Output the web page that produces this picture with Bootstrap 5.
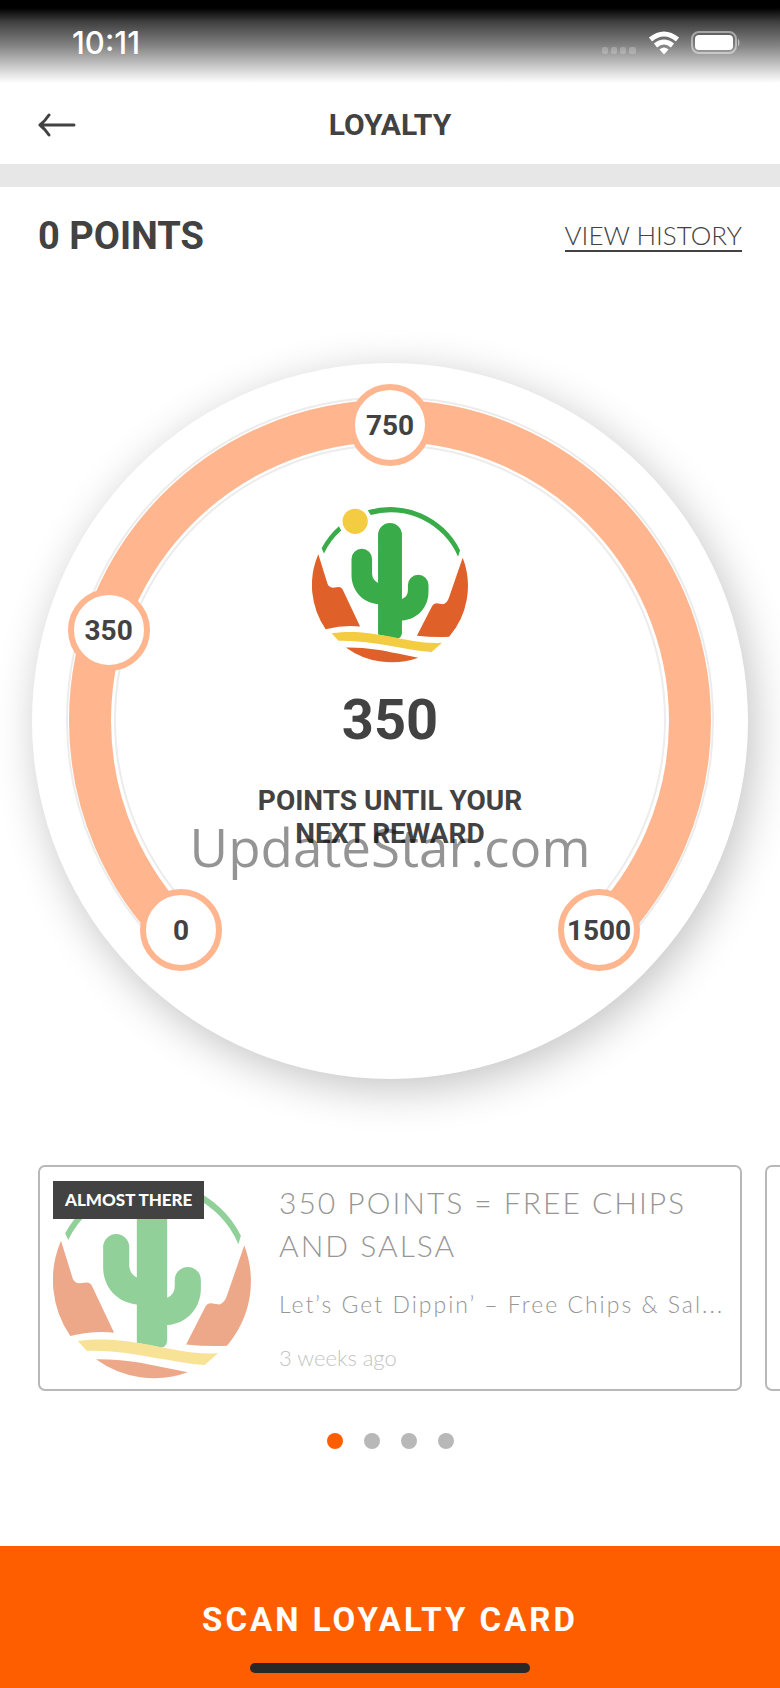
<!DOCTYPE html>
<html lang="en">
<head>
<meta charset="utf-8">
<meta name="viewport" content="width=device-width, initial-scale=1">
<title>Loyalty</title>
<link href="https://cdn.jsdelivr.net/npm/bootstrap@5.3.0/dist/css/bootstrap.min.css" rel="stylesheet">
<style>
  :root { --ink: #424242; --brand: #ff5e00; --peach: #ffb58d; --line: #b8b8b8; }
  body { font-family: Roboto, "Liberation Sans", sans-serif; color: var(--ink); background: #fff; overflow-x: hidden; }
  .thin-face { font-family: Lato, "Open Sans", sans-serif; font-weight: 300; }

  .status-bar { padding: 2px 40px 0 72px; height: 83px; color: #fff; background: linear-gradient(#000 0, #000 8px, #404040 22px, #848484 46px, #dcdcdc 72px, #fff 83px); }
  .clock { font: 500 31px/32px Inter, sans-serif; }
  .app-header { height: 81px; padding: 2px 38px 0; display: grid; grid-template-columns: 1fr auto 1fr; }
  .app-header h1 { font-size: 30px; line-height: 36px; }
  .divider-band { height: 23px; background: #e7e7e7; }
  .points-row { padding: 25px 38px 0; }
  .points-row h2 { font-size: 38px; line-height: 48px; }
  .history-link { font-size: 26px; line-height: 30px; color: var(--ink); border-bottom: 2px solid var(--ink); }

  .gauge { margin: 103px 32px 0; aspect-ratio: 1; box-shadow: 6px 10px 44px rgba(0, 0, 0, .24); }
  .gauge-ring { inset: 0; }
  .node { width: 82px; height: 82px; border: 6px solid var(--peach); font-size: 28px; line-height: 32px; padding-top: 2px; }
  .gauge-body { padding-top: 144px; }
  .gauge-body .logo { width: 156px; height: 156px; }
  .gauge-count { font-size: 56px; line-height: 64px; margin-top: 25px; }
  .gauge-note { font-size: 28px; line-height: 33px; margin-top: 32px; }
  .watermark { top: 62%; font: 400 53px/80px "Open Sans", "Noto Sans", sans-serif; color: rgba(0, 0, 0, .42); }

  .rewards { padding: 86px 0 0 38px; gap: 23px; }
  .reward { flex: 0 0 calc(100% - 38px); border: 2px solid var(--line); border-radius: 7px; padding: 14px 13px 10px; gap: 28px; color: #969696; min-width: 0; }
  .reward .logo { width: 198px; height: 198px; opacity: .55; }
  .tag { padding: 0 12px; font: 900 17px/38px Lato, sans-serif; color: #fff; background: var(--ink); }
  .reward h3 { font-size: 30px; line-height: 43px; letter-spacing: 2px; font-weight: 300; }
  .reward-text { font-size: 23px; line-height: 30px; letter-spacing: 2px; margin-top: 22px; }
  .reward-time { font-size: 22px; line-height: 30px; margin-top: 24px; color: #c4c4c4; }

  .pager { padding: 42px 0 96px; gap: 21px; }
  .pager button { width: 16px; height: 16px; background: var(--line); }
  .pager button.active { background: var(--brand); }

  .scan { background: var(--brand); padding-bottom: 15px; }
  .scan button { color: #fff; font-size: 33px; line-height: 40px; font-weight: 700; letter-spacing: 3px; padding: 54px 0 23px; }
  .home-bar { width: 36%; height: 10px; background: #282826; }
</style>
</head>
<body>
<svg class="d-none" aria-hidden="true">
  <symbol id="cactus" viewBox="65 50 470 470">
    <g fill="#3aab49">
      <path d="M233 60A235 235 0 0 1 511 180L505 200A221 221 0 0 0 242 74Z"/>
      <path d="M146 108A235 235 0 0 0 94 174L101 190A221 221 0 0 1 153 121Z"/>
      <path d="M264 134A36 36 0 0 1 336 134V327Q354 320 354 300V285A31 31 0 0 1 416 285V305C416 350 385 388 336 392V430Q334 444 322 446L264 434V343C215 338 184 300 184 255V207A31 31 0 0 1 246 207V252Q247 270 264 279Z"/>
    </g>
    <g fill="#df6129">
      <path d="M84 192L112 282Q116 292 128 293L145 291Q153 291 157 298L210 410Q160 405 106 418A235 235 0 0 1 84 192Z"/>
      <path d="M519 203L478 322Q473 339 460 343L440 340Q431 340 427 348L381 438Q430 443 478 441A235 235 0 0 0 519 203Z"/>
      <path d="M167 473C230 472 280 482 320 491L385 504A235 235 0 0 1 167 473Z"/>
    </g>
    <g fill="#f4cc42">
      <circle cx="195" cy="93" r="38"/>
      <path d="M124 430C190 422 230 428 300 440C360 452 400 462 457 459L425 487C340 480 240 450 145 453Z"/>
    </g>
  </symbol>
</svg>

<div class="d-flex flex-column min-vh-100">
  <div class="status-bar d-flex align-items-center justify-content-between">
    <span class="clock">10:11</span>
    <span class="d-flex align-items-center">
      <svg width="139" height="26" viewBox="0 0 139 26" fill="#fff" aria-hidden="true">
        <g opacity=".22"><rect x="1" y="17" width="6" height="7" rx="2"/><rect x="10" y="17" width="6" height="7" rx="2"/><rect x="19" y="17" width="6" height="7" rx="2"/><rect x="28" y="17" width="7" height="7" rx="2"/></g>
        <g fill="none" stroke="#fff" stroke-width="5"><path d="M49.500 9.500Q63 -1.500 76.500 9.500"/><path d="M54.500 15.500Q63 8.500 71.500 15.500"/></g>
        <path d="M58.500 19.500Q63 15.500 67.500 19.500L63 24.500Z"/>
        <rect x="91" y="2" width="44" height="21" rx="7" fill="none" stroke="#fff" stroke-opacity=".45" stroke-width="2"/>
        <rect x="94" y="5" width="38" height="15" rx="4"/>
        <path d="M137 8.500Q140 12.500 137 16.500Z" opacity=".5"/>
      </svg>
    </span>
  </div>

  <header class="app-header align-items-center">
    <button type="button" class="btn p-0 border-0 lh-1 text-start" aria-label="Back">
      <svg width="38" height="24" viewBox="0 0 38 24" fill="none" stroke="#424242" stroke-width="3" stroke-linecap="round" stroke-linejoin="round" aria-hidden="true"><path d="M36 12H2M11 2Q7 8 2 12Q7 16 11 22"/></svg>
    </button>
    <h1 class="fw-bold m-0">LOYALTY</h1>
  </header>
  <div class="divider-band"></div>

  <main>
    <section class="points-row d-flex align-items-center justify-content-between">
      <h2 class="fw-bold m-0">0 POINTS</h2>
      <a href="#history" class="history-link thin-face text-decoration-none">VIEW HISTORY</a>
    </section>

    <section class="gauge position-relative rounded-circle bg-white text-center" aria-label="Reward progress">
      <svg class="gauge-ring position-absolute w-100 h-100" viewBox="0 0 716 716" fill="none" aria-hidden="true">
        <g stroke="#ececec" stroke-width="2"><path d="M130 586A323 323 0 1 1 586 586"/><path d="M164 552A275 275 0 1 1 552 552"/></g>
        <path d="M146 570A300 300 0 1 1 570 570" stroke="#ffb58d" stroke-width="42"/>
      </svg>
      <span class="node position-absolute translate-middle rounded-circle bg-white fw-bold d-flex align-items-center justify-content-center" style="left:20.8%;top:79.2%">0</span>
      <span class="node position-absolute translate-middle rounded-circle bg-white fw-bold d-flex align-items-center justify-content-center" style="left:10.7%;top:37.3%">350</span>
      <span class="node position-absolute translate-middle rounded-circle bg-white fw-bold d-flex align-items-center justify-content-center" style="left:50%;top:8.7%">750</span>
      <span class="node position-absolute translate-middle rounded-circle bg-white fw-bold d-flex align-items-center justify-content-center" style="left:79.2%;top:79.2%">1500</span>
      <div class="gauge-body position-relative">
        <svg class="logo d-block mx-auto" role="img" aria-label="Cactus logo"><use href="#cactus"/></svg>
        <p class="gauge-count fw-bold mb-0">350</p>
        <p class="gauge-note fw-bold mb-0">POINTS UNTIL YOUR<br>NEXT REWARD</p>
      </div>
      <div class="watermark position-absolute start-0 w-100">UpdateStar.com</div>
    </section>

    <section class="rewards d-flex overflow-hidden">
      <article class="reward d-flex">
        <div class="position-relative flex-shrink-0">
          <svg class="logo d-block" aria-hidden="true"><use href="#cactus"/></svg>
          <span class="tag position-absolute top-0 start-0 text-nowrap">ALMOST THERE</span>
        </div>
        <div class="thin-face flex-grow-1 overflow-hidden">
          <h3 class="m-0">350 POINTS = FREE CHIPS AND SALSA</h3>
          <p class="reward-text text-truncate mb-0">Let’s Get Dippin’ – Free Chips &amp; Sal...</p>
          <p class="reward-time mb-0">3 weeks ago</p>
        </div>
      </article>
      <article class="reward"></article>
    </section>

    <div class="pager d-flex justify-content-center">
      <button type="button" class="btn p-0 border-0 rounded-circle active" aria-label="Reward 1"></button>
      <button type="button" class="btn p-0 border-0 rounded-circle" aria-label="Reward 2"></button>
      <button type="button" class="btn p-0 border-0 rounded-circle" aria-label="Reward 3"></button>
      <button type="button" class="btn p-0 border-0 rounded-circle" aria-label="Reward 4"></button>
    </div>
  </main>

  <footer class="scan mt-auto">
    <button type="button" class="btn border-0 rounded-0 w-100">SCAN LOYALTY CARD</button>
    <div class="home-bar rounded-pill mx-auto"></div>
  </footer>
</div>
<script src="https://cdn.jsdelivr.net/npm/bootstrap@5.3.0/dist/js/bootstrap.bundle.min.js"></script>
</body>
</html>
